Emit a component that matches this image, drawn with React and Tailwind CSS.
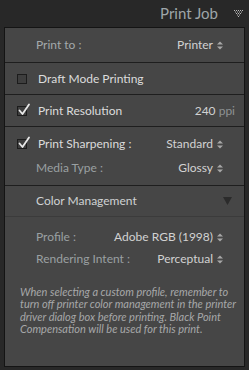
import React from "react";

const font = { fontFamily: 'Lato, "Open Sans", sans-serif' };

function UpDown() {
  return (
    <svg width="6" height="9" viewBox="0 0 6 9" className="ml-[4px] shrink-0">
      <path d="M0 3.5 L3 0.5 L6 3.5 Z" fill="#a8a8a8" />
      <path d="M0 5.5 L3 8.5 L6 5.5 Z" fill="#a8a8a8" />
    </svg>
  );
}

function Box({ checked }) {
  return (
    <div className="relative w-[10px] h-[10px] border border-[#1c1c1c] bg-[#3e3e3e] shrink-0">
      {checked && (
        <svg width="13" height="13" viewBox="0 0 13 13" className="absolute left-[0px] top-[-4px]">
          <path d="M1.5 7.5 L4.5 11 L11 1.5" stroke="#e8e8e8" strokeWidth="1.8" fill="none" strokeLinecap="round" strokeLinejoin="round" />
        </svg>
      )}
    </div>
  );
}

function Select({ label, value, labelColor = "text-[#a3a9ab]" }) {
  return (
    <div className="flex items-center justify-between pl-[31px] pr-[21px]">
      <span className={labelColor}>{label}</span>
      <span className="flex items-center text-[#d2d2d2]">
        {value}
        <UpDown />
      </span>
    </div>
  );
}

function HeaderIcon() {
  const dots = [];
  const rows = [
    [0, 2, 4, 6, 8],
    [1, 3, 5, 7],
    [2, 4, 6],
    [3, 5],
    [4],
  ];
  rows.forEach((r, i) =>
    r.forEach((x) => dots.push(<rect key={i + "-" + x} x={x} y={i * 1.5} width="1" height="1" fill="#b8b8b8" />))
  );
  return (
    <svg width="9" height="8" viewBox="0 0 9 8">
      {dots}
    </svg>
  );
}

export default function App() {
  return (
    <div className="w-[249px] h-[370px] bg-[#282828] text-[12px] leading-none overflow-hidden" style={font}>
      <div className="h-[27px] flex items-center justify-end pr-[6px]">
        <span className="text-[15px] text-[#9ea6a9] mr-[16px]">Print Job</span>
        <HeaderIcon />
      </div>
      <div className="mx-[4px] w-[241px] h-[340px] border border-[#141414] bg-[#464646]">
        <div className="h-[35px] border-b border-[#1e1e1e] flex flex-col justify-center">
          <Select label="Print to :" value="Printer" />
        </div>
        <div className="h-[32px] border-b border-[#1e1e1e] flex items-center pl-[12px] gap-[11px]">
          <Box />
          <span className="text-[#dcdcdc]">Draft Mode Printing</span>
        </div>
        <div className="h-[32px] border-b border-[#1e1e1e] flex items-center pl-[12px] pr-[9px]">
          <Box checked />
          <span className="text-[#dcdcdc] ml-[11px] mt-[1px]">Print Resolution</span>
          <span className="ml-auto mt-[1px] text-[#d2d2d2]">
            240 <span className="text-[#8e9294]">ppi</span>
          </span>
        </div>
        <div className="h-[59px] border-b border-[#1e1e1e] flex flex-col justify-center gap-[12px]">
          <div className="flex items-center justify-between pl-[12px] pr-[21px]">
            <div className="flex items-center gap-[11px]">
              <Box checked />
              <span className="text-[#dcdcdc]">Print Sharpening :</span>
            </div>
            <span className="flex items-center text-[#d2d2d2]">
              Standard
              <UpDown />
            </span>
          </div>
          <Select label="Media Type :" value="Glossy" labelColor="text-[#9aa0a2]" />
        </div>
        <div className="h-[31px] border-b border-[#3b3b3b] flex items-center pl-[31px] pr-[12px] justify-between">
          <span className="text-[#cfd2d3]">Color Management</span>
          <svg width="9" height="8" viewBox="0 0 9 8">
            <path d="M0 0 L9 0 L4.5 8 Z" fill="#2b2b2b" />
          </svg>
        </div>
        <div className="pt-[14px] flex flex-col gap-[10px]">
          <Select label="Profile :" value="Adobe RGB (1998)" labelColor="text-[#9aa0a2]" />
          <Select label="Rendering Intent :" value="Perceptual" labelColor="text-[#9aa0a2]" />
        </div>
        <p className="mt-[21px] pl-[15px] pr-[4px] italic text-[11px] leading-[12.3px] text-[#a6a8a9]">
          When selecting a custom profile, remember to turn off printer color management in the printer driver dialog box before printing. Black Point Compensation will be used for this print.
        </p>
      </div>
    </div>
  );
}
